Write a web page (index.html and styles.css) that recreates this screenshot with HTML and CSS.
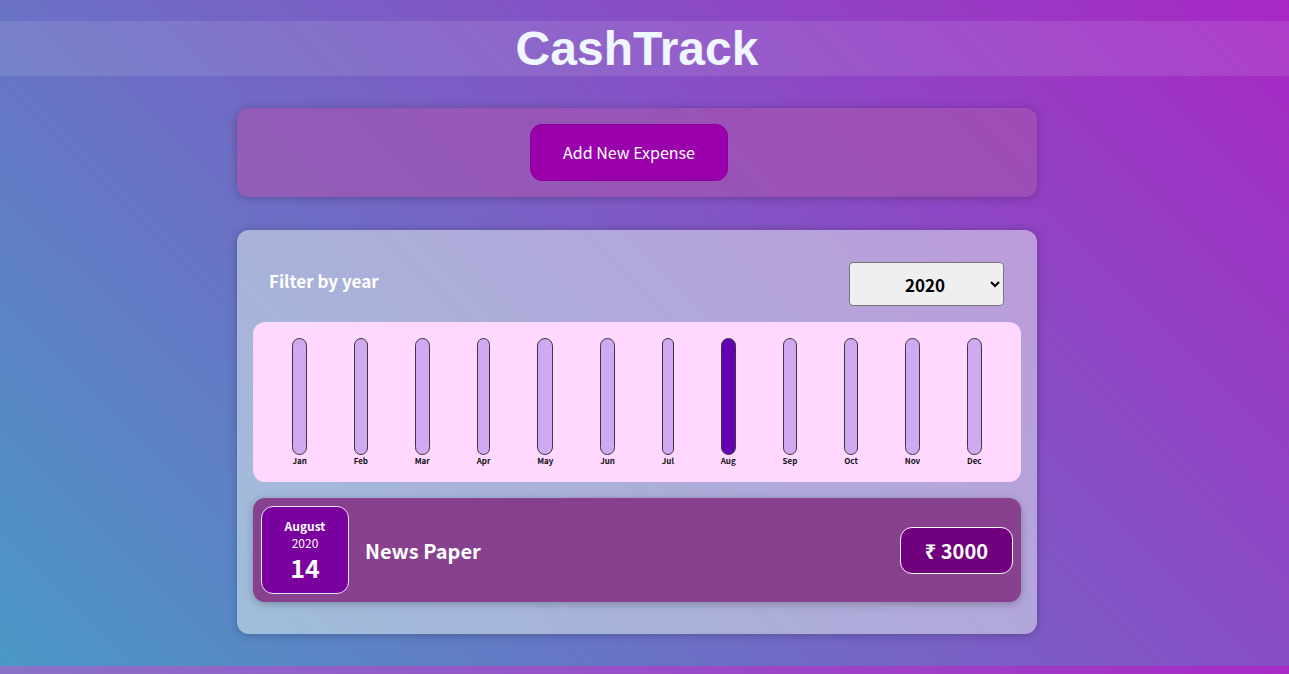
FILE: index.html
```html
<!DOCTYPE html>
<html lang="en">
<head>
<meta charset="utf-8">
<title>CashTrack</title>
<link rel="stylesheet" href="styles.css">
</head>
<body>
<div class="page">
  <header class="header"><h1 class="title">CashTrack</h1></header>

  <main class="main">
    <section class="new-expense">
      <button class="add-btn" type="button">Add New Expense</button>
    </section>

    <section class="expenses">
      <div class="filter">
        <label class="filter-label" for="year">Filter by year</label>
        <select class="filter-select" id="year">
          <option>2022</option>
          <option>2021</option>
          <option selected>2020</option>
          <option>2019</option>
        </select>
      </div>

      <div class="chart">
        <div class="bar"><div class="bar-inner"></div><div class="bar-label">Jan</div></div>
        <div class="bar"><div class="bar-inner"></div><div class="bar-label">Feb</div></div>
        <div class="bar"><div class="bar-inner"></div><div class="bar-label">Mar</div></div>
        <div class="bar"><div class="bar-inner"></div><div class="bar-label">Apr</div></div>
        <div class="bar"><div class="bar-inner"></div><div class="bar-label">May</div></div>
        <div class="bar"><div class="bar-inner"></div><div class="bar-label">Jun</div></div>
        <div class="bar"><div class="bar-inner"></div><div class="bar-label">Jul</div></div>
        <div class="bar"><div class="bar-inner bar-inner--full"></div><div class="bar-label">Aug</div></div>
        <div class="bar"><div class="bar-inner"></div><div class="bar-label">Sep</div></div>
        <div class="bar"><div class="bar-inner"></div><div class="bar-label">Oct</div></div>
        <div class="bar"><div class="bar-inner"></div><div class="bar-label">Nov</div></div>
        <div class="bar"><div class="bar-inner"></div><div class="bar-label">Dec</div></div>
      </div>

      <div class="item">
        <div class="date">
          <div class="date-month">August</div>
          <div class="date-year">2020</div>
          <div class="date-day">14</div>
        </div>
        <h2 class="item-title">News Paper</h2>
        <div class="price">₹ 3000</div>
      </div>
    </section>
  </main>
</div>
<div class="footer-strip"></div>
</body>
</html>
```

FILE: styles.css
```css
* { box-sizing: border-box; }

html, body {
  margin: 0;
  padding: 0;
}

body {
  font-family: "Noto Sans CJK JP", "Noto Sans", sans-serif;
  background: #8a6fca;
}

.page {
  height: 666px;
  overflow: hidden;
  background: linear-gradient(45deg, #4a98c6 0%, #a827c4 100%);
  padding-top: 21px;
}

.header {
  height: 55px;
  background: rgba(255, 255, 255, 0.1);
  text-align: center;
  padding-right: 15px;
}

.title {
  margin: 0;
  font-family: "Liberation Sans", Arial, sans-serif;
  font-weight: bold;
  font-size: 48px;
  line-height: 55px;
  color: #eef6ff;
}

.main {
  padding-right: 15px;
}

.new-expense {
  width: 800px;
  margin: 32px auto;
  padding: 16px;
  border-radius: 12px;
  background: rgba(165, 85, 175, 0.65);
  box-shadow: 0 1px 8px rgba(0, 0, 0, 0.25);
  text-align: center;
}

.add-btn {
  font: inherit;
  font-size: 16px;
  line-height: 23px;
  padding: 16px 32px;
  border: 1px solid #8a0099;
  background: #9b00ad;
  color: #fff;
  border-radius: 12px;
  margin-right: 16px;
}

.expenses {
  width: 800px;
  margin: 33px auto 0;
  padding: 16px;
  border-radius: 12px;
  background: rgba(232, 244, 240, 0.5);
  box-shadow: 0 1px 8px rgba(0, 0, 0, 0.25);
}

.filter {
  display: flex;
  align-items: center;
  justify-content: space-between;
  margin: 16px 0;
  padding: 0 17px 0 16px;
}

.filter-label {
  color: #fff;
  font-weight: bold;
  font-size: 17px;
  margin-bottom: 8px;
}

.filter-select {
  font: inherit;
  font-weight: bold;
  font-size: 17px;
  width: 155px;
  height: 44px;
  padding: 8px 8px 8px 51px;
  border: 1px solid #767676;
  border-radius: 4px;
  background: #efefef;
  color: #000;
}

.chart {
  height: 160px;
  padding: 16px;
  border-radius: 12px;
  background: #ffd7ff;
  display: flex;
  justify-content: space-around;
  text-align: center;
}

.bar {
  height: 100%;
  display: flex;
  flex-direction: column;
  align-items: center;
}

.bar-inner {
  flex: 1;
  width: 100%;
  border: 1px solid #3a3a3a;
  border-radius: 12px;
  background: #d1a8f2;
}

.bar-inner--full {
  background: #6500b5;
}

.bar-label {
  font-weight: bold;
  font-size: 8px;
  line-height: 11px;
  color: #111;
}

.item {
  display: flex;
  align-items: center;
  justify-content: space-between;
  padding: 8px;
  margin: 16px 0;
  border-radius: 12px;
  background: #88418f;
  box-shadow: 0 2px 8px rgba(0, 0, 0, 0.25);
}

.date {
  width: 88px;
  height: 88px;
  display: flex;
  flex-direction: column;
  align-items: center;
  justify-content: center;
  border: 1px solid #ececec;
  border-radius: 12px;
  background: #7b00a0;
  color: #fff;
}

.date-month {
  font-size: 12px;
  font-weight: bold;
  line-height: 17px;
}

.date-year {
  font-size: 12px;
  line-height: 17px;
}

.date-day {
  font-size: 25px;
  font-weight: bold;
  line-height: 33px;
}

.item-title {
  flex: 1;
  margin: 0 16px;
  font-size: 20px;
  color: #fff;
}

.price {
  font-size: 20px;
  font-weight: bold;
  line-height: 29px;
  color: #fff;
  background: #71007f;
  border: 1px solid #fff;
  padding: 8px 24px;
  border-radius: 12px;
}

.footer-strip {
  height: 8px;
  background: linear-gradient(90deg, #8a72c9, #a72ac6);
}
```
